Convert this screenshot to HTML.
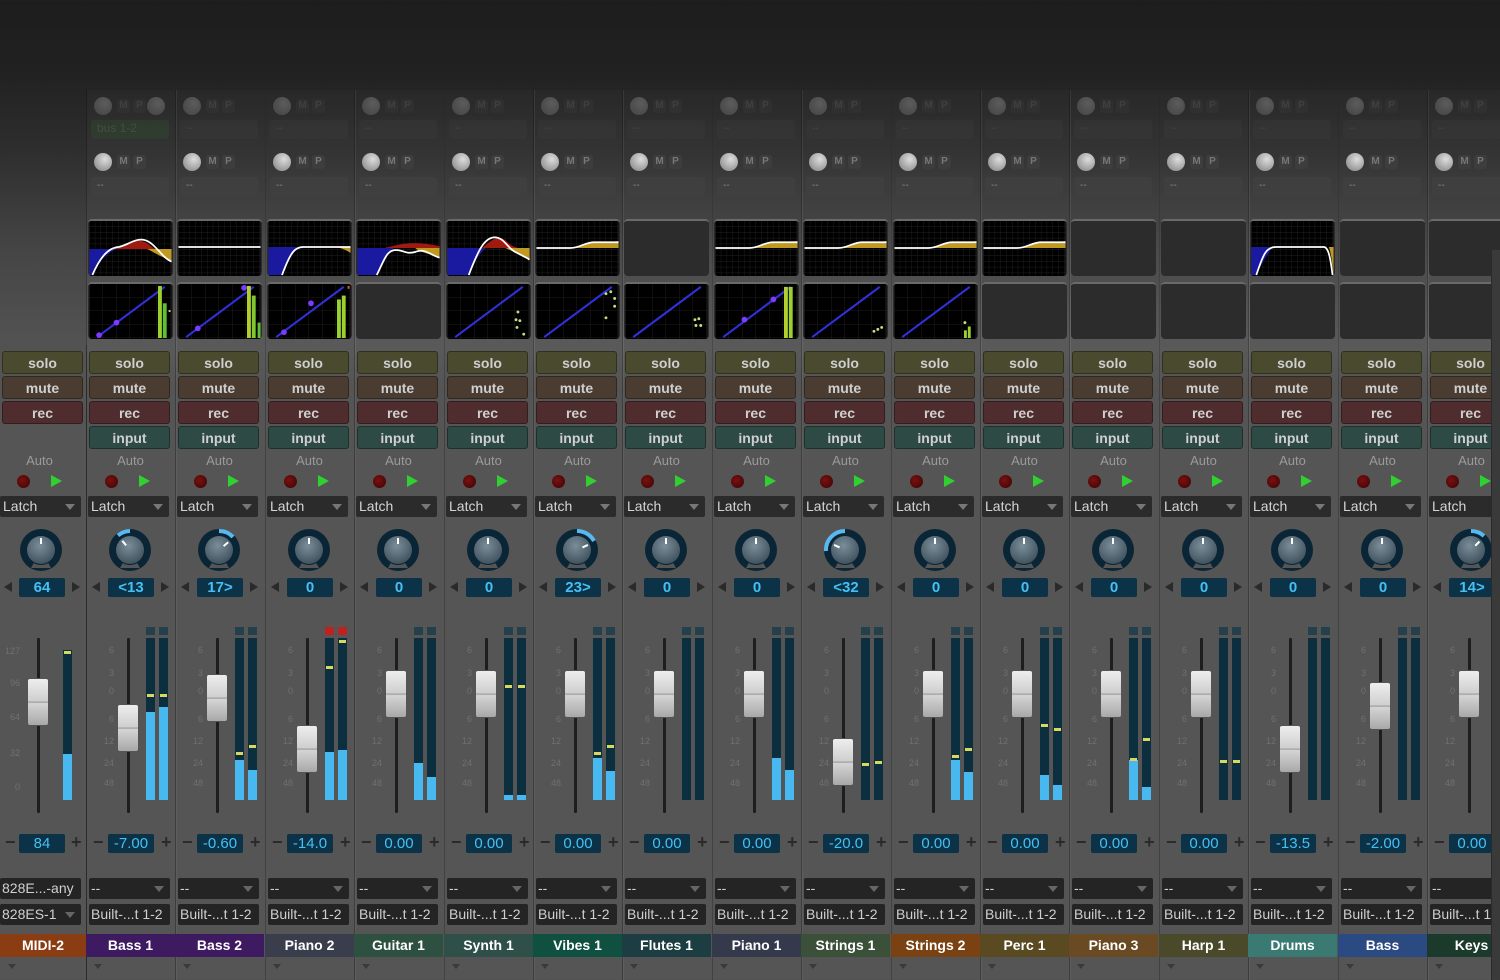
<!DOCTYPE html>
<html><head><meta charset="utf-8"><style>
*{margin:0;padding:0;box-sizing:border-box}
body{width:1500px;height:980px;overflow:hidden;position:relative;font-family:"Liberation Sans",sans-serif;background:linear-gradient(#1d1d1d 0,#212121 70px,#2e2e2e 150px,#454545 250px,#525252 340px,#555 400px,#555 980px)}
.s{position:absolute;top:0;width:89px;height:980px}
.s.t::before{content:"";position:absolute;left:0;top:90px;width:89px;height:890px;border-left:1px solid rgba(0,0,0,.28);border-right:1px solid rgba(255,255,255,.05);background:linear-gradient(rgba(255,255,255,.02),rgba(255,255,255,.04) 260px,rgba(0,0,0,0) 300px)}
.s.f::before{content:"";position:absolute;left:0;top:345px;width:86px;height:635px;border-right:1px solid rgba(0,0,0,.28)}
.s>*{position:absolute}
.kr{left:5px;width:60px;height:18px}
.kr i{position:absolute;left:3px;top:0;width:18px;height:18px;border-radius:50%;background:radial-gradient(circle at 60% 35%,#ddd,#9a9a9a 70%)}
.kr b{position:absolute;top:2px;width:13px;height:14px;border-radius:3px;background:#3d3d3d;color:#777;font-size:10px;line-height:14px;text-align:center}
.fa{opacity:.28}
.bx{left:5px;width:78px;height:19px;border-radius:3px;background:#3f3f3f;color:#888;font-size:10px;padding-left:6px;line-height:17px}
.eq,.dy{left:2px;width:85px;height:57px;border-radius:4px;background:#2c2c2c;overflow:hidden;border-top:2px solid #6a6a6a}
.eq{top:219px}.dy{top:282px}
.b{left:3px;width:81px;height:23px;border-radius:3px;color:#cfcfcf;font-weight:bold;font-size:14px;text-align:center;line-height:22px;border:1px solid rgba(0,0,0,.35)}
.so{top:351px;background:#4a4a2f}.mu{top:376px;background:#4b3c31}.re{top:401px;background:#4f2d2e}.in{top:426px;background:#2e4a44}
.au{top:453px;left:0;width:89px;text-align:center;color:#9a9a9a;font-size:13px}
.rd{top:475px;left:19px;width:13px;height:13px;border-radius:50%;background:radial-gradient(circle at 40% 40%,#7a1010,#3a0404)}
.pl{top:475px;left:53px;width:0;height:0;border-top:6px solid transparent;border-bottom:6px solid transparent;border-left:11px solid #2fd02f}
.la{top:496px;left:2px;width:81px;height:21px;background:#2b2b2b;border-radius:2px;color:#d5d5d5;font-size:14px;line-height:20px;padding-left:3px}
.la i{position:absolute;right:6px;top:8px;border-left:5px solid transparent;border-right:5px solid transparent;border-top:6px solid #777}
.kn{top:526px;left:20px;width:48px;height:48px}
.pv,.vv{left:22px;width:46px;height:19px;background:#0b3247;border-radius:2px;color:#45c0f5;font-weight:bold;font-size:15px;text-align:center;line-height:19px}
.pv{top:578px}.vv{top:834px;font-weight:normal;font-size:15px}
.al,.ar{top:582px;width:0;height:0;border-top:5px solid transparent;border-bottom:5px solid transparent}
.al{left:6px;border-right:8px solid #2a2a2a}.ar{left:75px;border-left:8px solid #2a2a2a}
.mi,.pu{top:832px;color:#2a2a2a;font-weight:bold;font-size:18px}
.mi{left:7px}.pu{left:75px}
.sc{left:8px;top:640px;width:22px;height:170px;color:#707070;font-size:9px}
.sc span{position:absolute;right:2px}
.tr{left:41px;top:638px;width:3px;height:175px;background:#1e1e1e;border-radius:1px}
.h{left:31px;width:22px;height:48px;border-radius:3px;background:linear-gradient(#eee,#cfcfcf 48%,#999 50%,#d5d5d5 53%,#a8a8a8);border:1px solid #555}
.m{top:638px;width:9px;height:162px;background:#0c2f40;overflow:hidden}
.m i{position:absolute;left:0;bottom:0;width:9px;background:#47b8f0}
.m b{position:absolute;left:1px;width:7px;height:3px;background:#d8d860}
.cp{top:627px;width:9px;height:8px;background:#23404c}
.o1,.o2{left:3px;width:81px;height:21px;background:#242424;border-radius:2px;color:#d0d0d0;font-size:14px;line-height:21px;padding-left:2px;white-space:nowrap;overflow:hidden}
.o1{top:878px}.o2{top:904px}
.o1 i{position:absolute;right:6px;top:8px;border-left:5px solid transparent;border-right:5px solid transparent;border-top:6px solid #666}
.nm{top:934px;left:0;width:89px;height:23px;color:#fff;font-weight:bold;font-size:14px;text-align:center;line-height:23px}
.dn{top:964px;left:8px;border-left:4px solid transparent;border-right:4px solid transparent;border-top:5px solid #3a3a3a}
</style></head><body>
<svg width="0" height="0" style="position:absolute"><defs>
<pattern id="g" width="6" height="6" patternUnits="userSpaceOnUse"><path d="M6,0V6H0" fill="none" stroke="#2a2a2a" stroke-width="0.7"/></pattern>
<pattern id="g2" width="14" height="14" patternUnits="userSpaceOnUse"><path d="M14,0V14H0" fill="none" stroke="#2a2424" stroke-width="0.8"/></pattern>
<g id="kb"><circle cx="24" cy="24" r="21" fill="#0a2535"/><path d="M14,42 L24,24 L34,42Z" fill="#555"/><circle cx="24" cy="24" r="15" fill="#0a2535"/><circle cx="24" cy="24" r="14" fill="url(#kg)"/></g>
<radialGradient id="kg" cx="45%" cy="35%" r="70%"><stop offset="0" stop-color="#7a8e9a"/><stop offset="1" stop-color="#3c4e5a"/></radialGradient>
<g id="eb"><rect width="85" height="57" fill="#000"/><rect width="85" height="57" fill="url(#g)"/></g>
<g id="db"><rect width="85" height="57" fill="#000"/><rect width="85" height="57" fill="url(#g2)"/><path d="M8,55 L78,3" stroke="#3030d8" stroke-width="2.2"/></g>
<g id="sh"><path d="M40,28 C50,24 55,22 85,21 V28Z" fill="#c09a20"/><path d="M0,28 H35 C45,28 50,22 60,22 H85" fill="none" stroke="#fff" stroke-width="1.8"/></g>
</defs></svg>

<!-- strip 0 -->
<div class="s f" style="left:0">
<div class="b so" style="left:2px">solo</div><div class="b mu" style="left:2px">mute</div><div class="b re" style="left:2px">rec</div>
<div class="au" style="left:-5px">Auto</div><div class="rd" style="left:17px"></div><div class="pl" style="left:51px"></div>
<div class="la" style="left:0">Latch<i></i></div>
<svg class="kn" style="left:17px" viewBox="0 0 48 48"><use href="#kb"/><line x1="24" y1="12" x2="24" y2="18" stroke="#fff" stroke-width="2"/></svg>
<div class="al" style="left:4px"></div><div class="pv" style="left:19px">64</div><div class="ar" style="left:72px"></div>
<div class="sc" style="left:0"><span style="top:6px">127</span><span style="top:38px">96</span><span style="top:72px">64</span><span style="top:108px">32</span><span style="top:142px">0</span></div>
<div class="tr" style="left:37px"></div><div class="h" style="left:27px;top:678px"></div>
<div class="m" style="left:63px;top:650px;height:150px"><i style="height:46px"></i><b style="top:1px"></b></div>
<div class="mi" style="left:5px">−</div><div class="vv" style="left:19px">84</div><div class="pu" style="left:71px">+</div>
<div class="o1" style="left:0">828E...-any</div><div class="o2" style="left:0">828ES-1<i style="position:absolute;right:6px;top:8px;border-left:5px solid transparent;border-right:5px solid transparent;border-top:6px solid #666"></i></div>
<div class="nm" style="width:86px;background:#8a3c12">MIDI-2</div><div class="dn"></div>
</div>

<div id="strips">
<!-- strip template repeated -->
<div class="s t" style="left:86px">
<div class="kr fa" style="top:97px"><i></i><b style="left:26px">M</b><b style="left:42px">P</b><i style="left:56px"></i></div>
<div class="bx fa" style="top:120px;background:#2f5a2f;color:#7a9a7a;font-size:12px">bus 1-2</div>
<div class="kr" style="top:153px"><i></i><b style="left:26px">M</b><b style="left:42px">P</b></div><div class="bx" style="top:177px">--</div>
<svg class="eq" viewBox="0 0 85 57"><use href="#eb"/><path d="M0,29 L28,29 C15,35 8,45 3,56 L0,56Z" fill="#1a1aa0"/><path d="M25,29 C40,22 50,18 58,22 C63,25 66,28 68,29Z" fill="#a01a10"/><path d="M60,29 L85,29 L85,41 C75,38 68,33 60,29Z" fill="#c09a20"/><path d="M3,56 C10,40 18,28 30,27 C40,25 48,17 58,20 C68,23 75,38 85,42" fill="none" stroke="#fff" stroke-width="1.8"/></svg>
<svg class="dy" viewBox="0 0 85 57"><use href="#db"/><circle cx="10" cy="53" r="3" fill="#7a3aff"/><circle cx="28" cy="40" r="3" fill="#7a3aff"/><rect x="71" y="2" width="4" height="54" fill="#9ad030"/><rect x="76" y="20" width="4" height="36" fill="#60c030"/><rect x="82" y="27" width="2" height="2" fill="#d8d860"/></svg>
<div class="b so">solo</div><div class="b mu">mute</div><div class="b re">rec</div><div class="b in">input</div>
<div class="au">Auto</div><div class="rd"></div><div class="pl"></div><div class="la">Latch<i></i></div>
<svg class="kn" viewBox="0 0 48 48"><use href="#kb"/><path d="M24,5 A19,19 0 0,0 12,9.5" stroke="#5ab8f0" stroke-width="4" fill="none"/><line x1="24" y1="12" x2="24" y2="18" stroke="#fff" stroke-width="2" transform="rotate(-40 24 24)"/></svg>
<div class="al"></div><div class="pv">&lt;13</div><div class="ar"></div>
<div class="sc"><span style="top:5px">6</span><span style="top:28px">3</span><span style="top:46px">0</span><span style="top:74px">6</span><span style="top:96px">12</span><span style="top:118px">24</span><span style="top:138px">48</span></div>
<div class="tr"></div><div class="h" style="top:704px"></div>
<div class="cp" style="left:60px"></div><div class="cp" style="left:73px"></div>
<div class="m" style="left:60px"><i style="height:88px"></i><b style="top:56px"></b></div><div class="m" style="left:73px"><i style="height:93px"></i><b style="top:56px"></b></div>
<div class="mi">−</div><div class="vv">-7.00</div><div class="pu">+</div>
<div class="o1">--<i></i></div><div class="o2">Built-...t 1-2</div><div class="nm" style="background:#3e1a60">Bass 1</div><div class="dn"></div>
</div>

<div class="s t" style="left:175px">
<div class="kr fa" style="top:97px"><i></i><b style="left:26px">M</b><b style="left:42px">P</b></div><div class="bx fa" style="top:120px">--</div>
<div class="kr" style="top:153px"><i></i><b style="left:26px">M</b><b style="left:42px">P</b></div><div class="bx" style="top:177px">--</div>
<svg class="eq" viewBox="0 0 85 57"><use href="#eb"/><path d="M0,27 H85" stroke="#fff" stroke-width="1.8"/></svg>
<svg class="dy" viewBox="0 0 85 57"><use href="#db"/><circle cx="20" cy="46" r="3" fill="#7a3aff"/><circle cx="68" cy="4" r="3" fill="#7a3aff"/><rect x="71" y="2" width="4" height="54" fill="#b0d030"/><rect x="76" y="12" width="4" height="44" fill="#80c830"/><rect x="82" y="40" width="3" height="16" fill="#60c030"/></svg>
<div class="b so">solo</div><div class="b mu">mute</div><div class="b re">rec</div><div class="b in">input</div>
<div class="au">Auto</div><div class="rd"></div><div class="pl"></div><div class="la">Latch<i></i></div>
<svg class="kn" viewBox="0 0 48 48"><use href="#kb"/><path d="M24,5 A19,19 0 0,1 38,11" stroke="#5ab8f0" stroke-width="4" fill="none"/><line x1="24" y1="12" x2="24" y2="18" stroke="#fff" stroke-width="2" transform="rotate(50 24 24)"/></svg>
<div class="al"></div><div class="pv">17&gt;</div><div class="ar"></div>
<div class="sc"><span style="top:5px">6</span><span style="top:28px">3</span><span style="top:46px">0</span><span style="top:74px">6</span><span style="top:96px">12</span><span style="top:118px">24</span><span style="top:138px">48</span></div>
<div class="tr"></div><div class="h" style="top:674px"></div>
<div class="cp" style="left:60px"></div><div class="cp" style="left:73px"></div>
<div class="m" style="left:60px"><i style="height:40px"></i><b style="top:114px"></b></div><div class="m" style="left:73px"><i style="height:30px"></i><b style="top:107px"></b></div>
<div class="mi">−</div><div class="vv">-0.60</div><div class="pu">+</div>
<div class="o1">--<i></i></div><div class="o2">Built-...t 1-2</div><div class="nm" style="background:#3e1a60">Bass 2</div><div class="dn"></div>
</div>

<div class="s t" style="left:265px">
<div class="kr fa" style="top:97px"><i></i><b style="left:26px">M</b><b style="left:42px">P</b></div><div class="bx fa" style="top:120px">--</div>
<div class="kr" style="top:153px"><i></i><b style="left:26px">M</b><b style="left:42px">P</b></div><div class="bx" style="top:177px">--</div>
<svg class="eq" viewBox="0 0 85 57"><use href="#eb"/><path d="M0,27 H32 C26,32 20,42 14,56 H0Z" fill="#1a1aa0"/><path d="M70,27 H85 V33 C80,30 75,28 70,27Z" fill="#c09a20"/><path d="M14,56 C22,35 26,27 36,27 L85,27" fill="none" stroke="#fff" stroke-width="1.8"/></svg>
<svg class="dy" viewBox="0 0 85 57"><use href="#db"/><circle cx="16" cy="50" r="3" fill="#7a3aff"/><circle cx="44" cy="20" r="3" fill="#7a3aff"/><rect x="71" y="16" width="4" height="40" fill="#9ad030"/><rect x="76" y="12" width="4" height="44" fill="#9ad030"/><rect x="82" y="2" width="2" height="3" fill="#d06030"/></svg>
<div class="b so">solo</div><div class="b mu">mute</div><div class="b re">rec</div><div class="b in">input</div>
<div class="au">Auto</div><div class="rd"></div><div class="pl"></div><div class="la">Latch<i></i></div>
<svg class="kn" viewBox="0 0 48 48"><use href="#kb"/><line x1="24" y1="12" x2="24" y2="18" stroke="#fff" stroke-width="2"/></svg>
<div class="al"></div><div class="pv">0</div><div class="ar"></div>
<div class="sc"><span style="top:5px">6</span><span style="top:28px">3</span><span style="top:46px">0</span><span style="top:74px">6</span><span style="top:96px">12</span><span style="top:118px">24</span><span style="top:138px">48</span></div>
<div class="tr"></div><div class="h" style="top:725px"></div>
<div class="cp" style="left:60px;background:#c02020"></div><div class="cp" style="left:73px;background:#c02020"></div>
<div class="m" style="left:60px"><i style="height:48px"></i><b style="top:28px"></b></div><div class="m" style="left:73px"><i style="height:50px"></i><b style="top:2px"></b></div>
<div class="mi">−</div><div class="vv">-14.0</div><div class="pu">+</div>
<div class="o1">--<i></i></div><div class="o2">Built-...t 1-2</div><div class="nm" style="background:#3a3e4c">Piano 2</div><div class="dn"></div>
</div>

<div class="s t" style="left:354px">
<div class="kr fa" style="top:97px"><i></i><b style="left:26px">M</b><b style="left:42px">P</b></div><div class="bx fa" style="top:120px">--</div>
<div class="kr" style="top:153px"><i></i><b style="left:26px">M</b><b style="left:42px">P</b></div><div class="bx" style="top:177px">--</div>
<svg class="eq" viewBox="0 0 85 57"><use href="#eb"/><path d="M0,28 H38 C32,32 26,42 20,56 H0Z" fill="#1a1aa0"/><path d="M28,28 C45,24 55,20 85,26 V28Z" fill="#a01a10"/><path d="M60,28 H85 V38 C70,32 65,33 60,28Z" fill="#c09a20"/><path d="M20,56 C28,40 30,30 40,30 C48,30 50,35 60,32 C70,28 75,35 85,38" fill="none" stroke="#fff" stroke-width="1.8"/></svg>
<div class="dy"></div>
<div class="b so">solo</div><div class="b mu">mute</div><div class="b re">rec</div><div class="b in">input</div>
<div class="au">Auto</div><div class="rd"></div><div class="pl"></div><div class="la">Latch<i></i></div>
<svg class="kn" viewBox="0 0 48 48"><use href="#kb"/><line x1="24" y1="12" x2="24" y2="18" stroke="#fff" stroke-width="2"/></svg>
<div class="al"></div><div class="pv">0</div><div class="ar"></div>
<div class="sc"><span style="top:5px">6</span><span style="top:28px">3</span><span style="top:46px">0</span><span style="top:74px">6</span><span style="top:96px">12</span><span style="top:118px">24</span><span style="top:138px">48</span></div>
<div class="tr"></div><div class="h" style="top:670px"></div>
<div class="cp" style="left:60px"></div><div class="cp" style="left:73px"></div>
<div class="m" style="left:60px"><i style="height:37px"></i></div><div class="m" style="left:73px"><i style="height:23px"></i></div>
<div class="mi">−</div><div class="vv">0.00</div><div class="pu">+</div>
<div class="o1">--<i></i></div><div class="o2">Built-...t 1-2</div><div class="nm" style="background:#2e5040">Guitar 1</div><div class="dn"></div>
</div>

<div class="s t" style="left:444px">
<div class="kr fa" style="top:97px"><i></i><b style="left:26px">M</b><b style="left:42px">P</b></div><div class="bx fa" style="top:120px">--</div>
<div class="kr" style="top:153px"><i></i><b style="left:26px">M</b><b style="left:42px">P</b></div><div class="bx" style="top:177px">--</div>
<svg class="eq" viewBox="0 0 85 57"><use href="#eb"/><path d="M0,28 H40 C34,32 28,42 22,56 H0Z" fill="#1a1aa0"/><path d="M36,28 C45,20 52,14 60,20 C65,25 70,28 75,28Z" fill="#a01a10"/><path d="M60,28 H85 V40 C75,35 65,30 60,28Z" fill="#c09a20"/><path d="M22,56 C32,30 38,18 48,17 C58,16 62,28 70,32 C78,36 82,38 85,40" fill="none" stroke="#fff" stroke-width="1.8"/></svg>
<svg class="dy" viewBox="0 0 85 57"><use href="#db"/><circle cx="73" cy="29" r="1.5" fill="#c0e080"/><circle cx="71" cy="37" r="1.5" fill="#c0e080"/><circle cx="75" cy="38" r="1.5" fill="#c0e080"/><circle cx="72" cy="45" r="1.5" fill="#c0e080"/><circle cx="79" cy="52" r="1.5" fill="#c0e080"/></svg>
<div class="b so">solo</div><div class="b mu">mute</div><div class="b re">rec</div><div class="b in">input</div>
<div class="au">Auto</div><div class="rd"></div><div class="pl"></div><div class="la">Latch<i></i></div>
<svg class="kn" viewBox="0 0 48 48"><use href="#kb"/><line x1="24" y1="12" x2="24" y2="18" stroke="#fff" stroke-width="2"/></svg>
<div class="al"></div><div class="pv">0</div><div class="ar"></div>
<div class="sc"><span style="top:5px">6</span><span style="top:28px">3</span><span style="top:46px">0</span><span style="top:74px">6</span><span style="top:96px">12</span><span style="top:118px">24</span><span style="top:138px">48</span></div>
<div class="tr"></div><div class="h" style="top:670px"></div>
<div class="cp" style="left:60px"></div><div class="cp" style="left:73px"></div>
<div class="m" style="left:60px"><i style="height:5px"></i><b style="top:47px"></b></div><div class="m" style="left:73px"><i style="height:5px"></i><b style="top:47px"></b></div>
<div class="mi">−</div><div class="vv">0.00</div><div class="pu">+</div>
<div class="o1">--<i></i></div><div class="o2">Built-...t 1-2</div><div class="nm" style="background:#2e5048">Synth 1</div><div class="dn"></div>
</div>

<div class="s t" style="left:533px">
<div class="kr fa" style="top:97px"><i></i><b style="left:26px">M</b><b style="left:42px">P</b></div><div class="bx fa" style="top:120px">--</div>
<div class="kr" style="top:153px"><i></i><b style="left:26px">M</b><b style="left:42px">P</b></div><div class="bx" style="top:177px">--</div>
<svg class="eq" viewBox="0 0 85 57"><use href="#eb"/><use href="#sh"/></svg>
<svg class="dy" viewBox="0 0 85 57"><use href="#db"/><circle cx="72" cy="10" r="1.5" fill="#c0e080"/><circle cx="77" cy="8" r="1.5" fill="#c0e080"/><circle cx="81" cy="15" r="1.5" fill="#c0e080"/><circle cx="81" cy="23" r="1.5" fill="#c0e080"/><circle cx="72" cy="35" r="1.5" fill="#c0e080"/></svg>
<div class="b so">solo</div><div class="b mu">mute</div><div class="b re">rec</div><div class="b in">input</div>
<div class="au">Auto</div><div class="rd"></div><div class="pl"></div><div class="la">Latch<i></i></div>
<svg class="kn" viewBox="0 0 48 48"><use href="#kb"/><path d="M24,5 A19,19 0 0,1 41,15" stroke="#5ab8f0" stroke-width="4" fill="none"/><line x1="24" y1="12" x2="24" y2="18" stroke="#fff" stroke-width="2" transform="rotate(65 24 24)"/></svg>
<div class="al"></div><div class="pv">23&gt;</div><div class="ar"></div>
<div class="sc"><span style="top:5px">6</span><span style="top:28px">3</span><span style="top:46px">0</span><span style="top:74px">6</span><span style="top:96px">12</span><span style="top:118px">24</span><span style="top:138px">48</span></div>
<div class="tr"></div><div class="h" style="top:670px"></div>
<div class="cp" style="left:60px"></div><div class="cp" style="left:73px"></div>
<div class="m" style="left:60px"><i style="height:42px"></i><b style="top:114px"></b></div><div class="m" style="left:73px"><i style="height:29px"></i><b style="top:107px"></b></div>
<div class="mi">−</div><div class="vv">0.00</div><div class="pu">+</div>
<div class="o1">--<i></i></div><div class="o2">Built-...t 1-2</div><div class="nm" style="background:#0f5040">Vibes 1</div><div class="dn"></div>
</div>

<div class="s t" style="left:622px">
<div class="kr fa" style="top:97px"><i></i><b style="left:26px">M</b><b style="left:42px">P</b></div><div class="bx fa" style="top:120px">--</div>
<div class="kr" style="top:153px"><i></i><b style="left:26px">M</b><b style="left:42px">P</b></div><div class="bx" style="top:177px">--</div>
<div class="eq"></div>
<svg class="dy" viewBox="0 0 85 57"><use href="#db"/><circle cx="72" cy="37" r="1.5" fill="#c0e080"/><circle cx="76" cy="36" r="1.5" fill="#c0e080"/><circle cx="73" cy="43" r="1.5" fill="#c0e080"/><circle cx="78" cy="43" r="1.5" fill="#c0e080"/></svg>
<div class="b so">solo</div><div class="b mu">mute</div><div class="b re">rec</div><div class="b in">input</div>
<div class="au">Auto</div><div class="rd"></div><div class="pl"></div><div class="la">Latch<i></i></div>
<svg class="kn" viewBox="0 0 48 48"><use href="#kb"/><line x1="24" y1="12" x2="24" y2="18" stroke="#fff" stroke-width="2"/></svg>
<div class="al"></div><div class="pv">0</div><div class="ar"></div>
<div class="sc"><span style="top:5px">6</span><span style="top:28px">3</span><span style="top:46px">0</span><span style="top:74px">6</span><span style="top:96px">12</span><span style="top:118px">24</span><span style="top:138px">48</span></div>
<div class="tr"></div><div class="h" style="top:670px"></div>
<div class="cp" style="left:60px"></div><div class="cp" style="left:73px"></div>
<div class="m" style="left:60px"></div><div class="m" style="left:73px"></div>
<div class="mi">−</div><div class="vv">0.00</div><div class="pu">+</div>
<div class="o1">--<i></i></div><div class="o2">Built-...t 1-2</div><div class="nm" style="background:#1c3e42">Flutes 1</div><div class="dn"></div>
</div>

<div class="s t" style="left:712px">
<div class="kr fa" style="top:97px"><i></i><b style="left:26px">M</b><b style="left:42px">P</b></div><div class="bx fa" style="top:120px">--</div>
<div class="kr" style="top:153px"><i></i><b style="left:26px">M</b><b style="left:42px">P</b></div><div class="bx" style="top:177px">--</div>
<svg class="eq" viewBox="0 0 85 57"><use href="#eb"/><use href="#sh"/></svg>
<svg class="dy" viewBox="0 0 85 57"><use href="#db"/><circle cx="30" cy="37" r="3" fill="#7a3aff"/><circle cx="60" cy="16" r="3" fill="#7a3aff"/><rect x="71" y="3" width="4" height="53" fill="#b0d030"/><rect x="76" y="3" width="4" height="53" fill="#9ad030"/></svg>
<div class="b so">solo</div><div class="b mu">mute</div><div class="b re">rec</div><div class="b in">input</div>
<div class="au">Auto</div><div class="rd"></div><div class="pl"></div><div class="la">Latch<i></i></div>
<svg class="kn" viewBox="0 0 48 48"><use href="#kb"/><line x1="24" y1="12" x2="24" y2="18" stroke="#fff" stroke-width="2"/></svg>
<div class="al"></div><div class="pv">0</div><div class="ar"></div>
<div class="sc"><span style="top:5px">6</span><span style="top:28px">3</span><span style="top:46px">0</span><span style="top:74px">6</span><span style="top:96px">12</span><span style="top:118px">24</span><span style="top:138px">48</span></div>
<div class="tr"></div><div class="h" style="top:670px"></div>
<div class="cp" style="left:60px"></div><div class="cp" style="left:73px"></div>
<div class="m" style="left:60px"><i style="height:42px"></i></div><div class="m" style="left:73px"><i style="height:30px"></i></div>
<div class="mi">−</div><div class="vv">0.00</div><div class="pu">+</div>
<div class="o1">--<i></i></div><div class="o2">Built-...t 1-2</div><div class="nm" style="background:#343a4c">Piano 1</div><div class="dn"></div>
</div>

<div class="s t" style="left:801px">
<div class="kr fa" style="top:97px"><i></i><b style="left:26px">M</b><b style="left:42px">P</b></div><div class="bx fa" style="top:120px">--</div>
<div class="kr" style="top:153px"><i></i><b style="left:26px">M</b><b style="left:42px">P</b></div><div class="bx" style="top:177px">--</div>
<svg class="eq" viewBox="0 0 85 57"><use href="#eb"/><use href="#sh"/></svg>
<svg class="dy" viewBox="0 0 85 57"><use href="#db"/><circle cx="72" cy="49" r="1.5" fill="#c0e080"/><circle cx="76" cy="47" r="1.5" fill="#c0e080"/><circle cx="80" cy="45" r="1.5" fill="#c0e080"/></svg>
<div class="b so">solo</div><div class="b mu">mute</div><div class="b re">rec</div><div class="b in">input</div>
<div class="au">Auto</div><div class="rd"></div><div class="pl"></div><div class="la">Latch<i></i></div>
<svg class="kn" viewBox="0 0 48 48"><use href="#kb"/><path d="M24,5 A19,19 0 0,0 5,25" stroke="#5ab8f0" stroke-width="4" fill="none"/><line x1="24" y1="12" x2="24" y2="18" stroke="#fff" stroke-width="2" transform="rotate(-65 24 24)"/></svg>
<div class="al"></div><div class="pv">&lt;32</div><div class="ar"></div>
<div class="sc"><span style="top:5px">6</span><span style="top:28px">3</span><span style="top:46px">0</span><span style="top:74px">6</span><span style="top:96px">12</span><span style="top:118px">24</span><span style="top:138px">48</span></div>
<div class="tr"></div><div class="h" style="top:738px"></div>
<div class="cp" style="left:60px"></div><div class="cp" style="left:73px"></div>
<div class="m" style="left:60px"><b style="top:125px"></b></div><div class="m" style="left:73px"><b style="top:123px"></b></div>
<div class="mi">−</div><div class="vv">-20.0</div><div class="pu">+</div>
<div class="o1">--<i></i></div><div class="o2">Built-...t 1-2</div><div class="nm" style="background:#3a5038">Strings 1</div><div class="dn"></div>
</div>

<div class="s t" style="left:891px">
<div class="kr fa" style="top:97px"><i></i><b style="left:26px">M</b><b style="left:42px">P</b></div><div class="bx fa" style="top:120px">--</div>
<div class="kr" style="top:153px"><i></i><b style="left:26px">M</b><b style="left:42px">P</b></div><div class="bx" style="top:177px">--</div>
<svg class="eq" viewBox="0 0 85 57"><use href="#eb"/><use href="#sh"/></svg>
<svg class="dy" viewBox="0 0 85 57"><use href="#db"/><rect x="72" y="48" width="3" height="8" fill="#9ad030"/><rect x="76" y="44" width="3" height="12" fill="#9ad030"/><circle cx="73" cy="40" r="1.5" fill="#c0e080"/></svg>
<div class="b so">solo</div><div class="b mu">mute</div><div class="b re">rec</div><div class="b in">input</div>
<div class="au">Auto</div><div class="rd"></div><div class="pl"></div><div class="la">Latch<i></i></div>
<svg class="kn" viewBox="0 0 48 48"><use href="#kb"/><line x1="24" y1="12" x2="24" y2="18" stroke="#fff" stroke-width="2"/></svg>
<div class="al"></div><div class="pv">0</div><div class="ar"></div>
<div class="sc"><span style="top:5px">6</span><span style="top:28px">3</span><span style="top:46px">0</span><span style="top:74px">6</span><span style="top:96px">12</span><span style="top:118px">24</span><span style="top:138px">48</span></div>
<div class="tr"></div><div class="h" style="top:670px"></div>
<div class="cp" style="left:60px"></div><div class="cp" style="left:73px"></div>
<div class="m" style="left:60px"><i style="height:40px"></i><b style="top:117px"></b></div><div class="m" style="left:73px"><i style="height:28px"></i><b style="top:110px"></b></div>
<div class="mi">−</div><div class="vv">0.00</div><div class="pu">+</div>
<div class="o1">--<i></i></div><div class="o2">Built-...t 1-2</div><div class="nm" style="background:#7a4212">Strings 2</div><div class="dn"></div>
</div>

<div class="s t" style="left:980px">
<div class="kr fa" style="top:97px"><i></i><b style="left:26px">M</b><b style="left:42px">P</b></div><div class="bx fa" style="top:120px">--</div>
<div class="kr" style="top:153px"><i></i><b style="left:26px">M</b><b style="left:42px">P</b></div><div class="bx" style="top:177px">--</div>
<svg class="eq" viewBox="0 0 85 57"><use href="#eb"/><use href="#sh"/></svg>
<div class="dy"></div>
<div class="b so">solo</div><div class="b mu">mute</div><div class="b re">rec</div><div class="b in">input</div>
<div class="au">Auto</div><div class="rd"></div><div class="pl"></div><div class="la">Latch<i></i></div>
<svg class="kn" viewBox="0 0 48 48"><use href="#kb"/><line x1="24" y1="12" x2="24" y2="18" stroke="#fff" stroke-width="2"/></svg>
<div class="al"></div><div class="pv">0</div><div class="ar"></div>
<div class="sc"><span style="top:5px">6</span><span style="top:28px">3</span><span style="top:46px">0</span><span style="top:74px">6</span><span style="top:96px">12</span><span style="top:118px">24</span><span style="top:138px">48</span></div>
<div class="tr"></div><div class="h" style="top:670px"></div>
<div class="cp" style="left:60px"></div><div class="cp" style="left:73px"></div>
<div class="m" style="left:60px"><i style="height:25px"></i><b style="top:86px"></b></div><div class="m" style="left:73px"><i style="height:15px"></i><b style="top:90px"></b></div>
<div class="mi">−</div><div class="vv">0.00</div><div class="pu">+</div>
<div class="o1">--<i></i></div><div class="o2">Built-...t 1-2</div><div class="nm" style="background:#5a4a22">Perc 1</div><div class="dn"></div>
</div>

<div class="s t" style="left:1069px">
<div class="kr fa" style="top:97px"><i></i><b style="left:26px">M</b><b style="left:42px">P</b></div><div class="bx fa" style="top:120px">--</div>
<div class="kr" style="top:153px"><i></i><b style="left:26px">M</b><b style="left:42px">P</b></div><div class="bx" style="top:177px">--</div>
<div class="eq"></div><div class="dy"></div>
<div class="b so">solo</div><div class="b mu">mute</div><div class="b re">rec</div><div class="b in">input</div>
<div class="au">Auto</div><div class="rd"></div><div class="pl"></div><div class="la">Latch<i></i></div>
<svg class="kn" viewBox="0 0 48 48"><use href="#kb"/><line x1="24" y1="12" x2="24" y2="18" stroke="#fff" stroke-width="2"/></svg>
<div class="al"></div><div class="pv">0</div><div class="ar"></div>
<div class="sc"><span style="top:5px">6</span><span style="top:28px">3</span><span style="top:46px">0</span><span style="top:74px">6</span><span style="top:96px">12</span><span style="top:118px">24</span><span style="top:138px">48</span></div>
<div class="tr"></div><div class="h" style="top:670px"></div>
<div class="cp" style="left:60px"></div><div class="cp" style="left:73px"></div>
<div class="m" style="left:60px"><i style="height:40px"></i><b style="top:120px"></b></div><div class="m" style="left:73px"><i style="height:13px"></i><b style="top:100px"></b></div>
<div class="mi">−</div><div class="vv">0.00</div><div class="pu">+</div>
<div class="o1">--<i></i></div><div class="o2">Built-...t 1-2</div><div class="nm" style="background:#6a4a22">Piano 3</div><div class="dn"></div>
</div>

<div class="s t" style="left:1159px">
<div class="kr fa" style="top:97px"><i></i><b style="left:26px">M</b><b style="left:42px">P</b></div><div class="bx fa" style="top:120px">--</div>
<div class="kr" style="top:153px"><i></i><b style="left:26px">M</b><b style="left:42px">P</b></div><div class="bx" style="top:177px">--</div>
<div class="eq"></div><div class="dy"></div>
<div class="b so">solo</div><div class="b mu">mute</div><div class="b re">rec</div><div class="b in">input</div>
<div class="au">Auto</div><div class="rd"></div><div class="pl"></div><div class="la">Latch<i></i></div>
<svg class="kn" viewBox="0 0 48 48"><use href="#kb"/><line x1="24" y1="12" x2="24" y2="18" stroke="#fff" stroke-width="2"/></svg>
<div class="al"></div><div class="pv">0</div><div class="ar"></div>
<div class="sc"><span style="top:5px">6</span><span style="top:28px">3</span><span style="top:46px">0</span><span style="top:74px">6</span><span style="top:96px">12</span><span style="top:118px">24</span><span style="top:138px">48</span></div>
<div class="tr"></div><div class="h" style="top:670px"></div>
<div class="cp" style="left:60px"></div><div class="cp" style="left:73px"></div>
<div class="m" style="left:60px"><b style="top:122px"></b></div><div class="m" style="left:73px"><b style="top:122px"></b></div>
<div class="mi">−</div><div class="vv">0.00</div><div class="pu">+</div>
<div class="o1">--<i></i></div><div class="o2">Built-...t 1-2</div><div class="nm" style="background:#4a4a2a">Harp 1</div><div class="dn"></div>
</div>

<div class="s t" style="left:1248px">
<div class="kr fa" style="top:97px"><i></i><b style="left:26px">M</b><b style="left:42px">P</b></div><div class="bx fa" style="top:120px">--</div>
<div class="kr" style="top:153px"><i></i><b style="left:26px">M</b><b style="left:42px">P</b></div><div class="bx" style="top:177px">--</div>
<svg class="eq" viewBox="0 0 85 57"><use href="#eb"/><path d="M0,27 H22 C16,35 10,45 5,56 H0Z" fill="#1a1aa0"/><path d="M80,27 H85 V56 C84,45 82,30 80,27Z" fill="#c09a20"/><path d="M5,56 C12,35 15,27 25,27 H75 C80,27 82,40 84,56" fill="none" stroke="#fff" stroke-width="1.8"/></svg>
<div class="dy"></div>
<div class="b so">solo</div><div class="b mu">mute</div><div class="b re">rec</div><div class="b in">input</div>
<div class="au">Auto</div><div class="rd"></div><div class="pl"></div><div class="la">Latch<i></i></div>
<svg class="kn" viewBox="0 0 48 48"><use href="#kb"/><line x1="24" y1="12" x2="24" y2="18" stroke="#fff" stroke-width="2"/></svg>
<div class="al"></div><div class="pv">0</div><div class="ar"></div>
<div class="sc"><span style="top:5px">6</span><span style="top:28px">3</span><span style="top:46px">0</span><span style="top:74px">6</span><span style="top:96px">12</span><span style="top:118px">24</span><span style="top:138px">48</span></div>
<div class="tr"></div><div class="h" style="top:725px"></div>
<div class="cp" style="left:60px"></div><div class="cp" style="left:73px"></div>
<div class="m" style="left:60px"></div><div class="m" style="left:73px"></div>
<div class="mi">−</div><div class="vv">-13.5</div><div class="pu">+</div>
<div class="o1">--<i></i></div><div class="o2">Built-...t 1-2</div><div class="nm" style="background:#3a7a72">Drums</div><div class="dn"></div>
</div>

<div class="s t" style="left:1338px">
<div class="kr fa" style="top:97px"><i></i><b style="left:26px">M</b><b style="left:42px">P</b></div><div class="bx fa" style="top:120px">--</div>
<div class="kr" style="top:153px"><i></i><b style="left:26px">M</b><b style="left:42px">P</b></div><div class="bx" style="top:177px">--</div>
<div class="eq"></div><div class="dy"></div>
<div class="b so">solo</div><div class="b mu">mute</div><div class="b re">rec</div><div class="b in">input</div>
<div class="au">Auto</div><div class="rd"></div><div class="pl"></div><div class="la">Latch<i></i></div>
<svg class="kn" viewBox="0 0 48 48"><use href="#kb"/><line x1="24" y1="12" x2="24" y2="18" stroke="#fff" stroke-width="2"/></svg>
<div class="al"></div><div class="pv">0</div><div class="ar"></div>
<div class="sc"><span style="top:5px">6</span><span style="top:28px">3</span><span style="top:46px">0</span><span style="top:74px">6</span><span style="top:96px">12</span><span style="top:118px">24</span><span style="top:138px">48</span></div>
<div class="tr"></div><div class="h" style="top:682px"></div>
<div class="cp" style="left:60px"></div><div class="cp" style="left:73px"></div>
<div class="m" style="left:60px"></div><div class="m" style="left:73px"></div>
<div class="mi">−</div><div class="vv">-2.00</div><div class="pu">+</div>
<div class="o1">--<i></i></div><div class="o2">Built-...t 1-2</div><div class="nm" style="background:#2c4a82">Bass</div><div class="dn"></div>
</div>

<div class="s t" style="left:1427px">
<div class="kr fa" style="top:97px"><i></i><b style="left:26px">M</b><b style="left:42px">P</b></div><div class="bx fa" style="top:120px">--</div>
<div class="kr" style="top:153px"><i></i><b style="left:26px">M</b><b style="left:42px">P</b></div><div class="bx" style="top:177px">--</div>
<div class="eq"></div><div class="dy"></div>
<div class="b so">solo</div><div class="b mu">mute</div><div class="b re">rec</div><div class="b in">input</div>
<div class="au">Auto</div><div class="rd"></div><div class="pl"></div><div class="la">Latch<i></i></div>
<svg class="kn" viewBox="0 0 48 48"><use href="#kb"/><path d="M24,5 A19,19 0 0,1 37,10" stroke="#5ab8f0" stroke-width="4" fill="none"/><line x1="24" y1="12" x2="24" y2="18" stroke="#fff" stroke-width="2" transform="rotate(45 24 24)"/></svg>
<div class="al"></div><div class="pv">14&gt;</div><div class="ar"></div>
<div class="sc"><span style="top:5px">6</span><span style="top:28px">3</span><span style="top:46px">0</span><span style="top:74px">6</span><span style="top:96px">12</span><span style="top:118px">24</span><span style="top:138px">48</span></div>
<div class="tr"></div><div class="h" style="top:670px"></div>
<div class="mi">−</div><div class="vv">0.00</div><div class="pu">+</div>
<div class="o1">--<i></i></div><div class="o2">Built-...t 1-2</div><div class="nm" style="background:#1c3a2c">Keys</div><div class="dn"></div>
</div>
</div>
<div style="position:absolute;left:1491px;top:250px;width:9px;height:730px;background:#3a3a3a;border-left:1px solid #2a2a2a"></div>
</body></html>
